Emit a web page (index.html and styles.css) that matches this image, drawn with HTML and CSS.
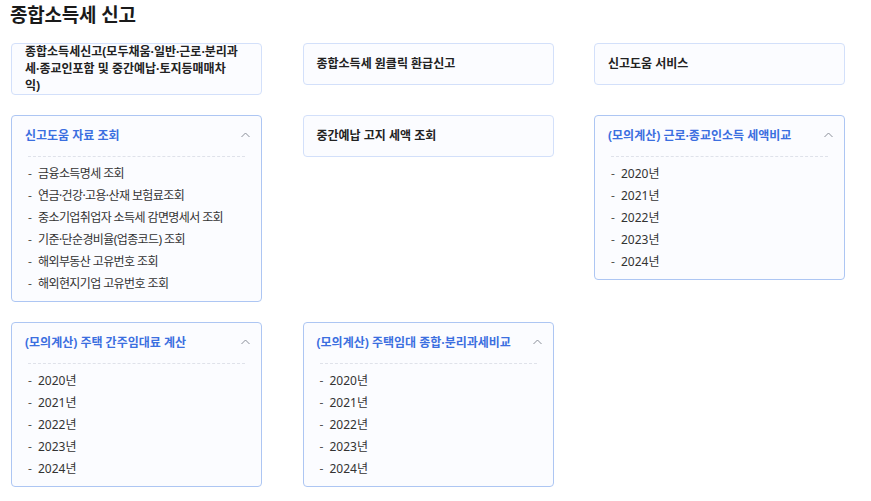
FILE: index.html
```html
<!DOCTYPE html>
<html lang="ko">
<head>
    <meta charset="UTF-8">
    <meta name="viewport" content="width=device-width, initial-scale=1.0">
    <title>종합소득세 신고</title>
    <link rel="stylesheet" href="styles.css">
</head>
<body>
    <h1>종합소득세 신고</h1>
    <div class="menu-grid">
        <a class="card card-link card-link--long" href="#">종합소득세신고(모두채움·일반·근로·분리과세·종교인포함 및 중간예납·토지등매매차익)</a>
        <a class="card card-link" href="#">종합소득세 원클릭 환급신고</a>
        <a class="card card-link" href="#">신고도움 서비스</a>

        <div class="card card-open">
            <div class="card-head">
                <span>신고도움 자료 조회</span>
                <svg class="caret" width="9" height="6" viewBox="0 0 9 6"><polyline points="0.5,5 4.5,1 8.5,5" fill="none" stroke="#8a8f99" stroke-width="1"/></svg>
            </div>
            <ul class="sub-list sub-list--docs">
                <li>금융소득명세 조회</li>
                <li>연금·건강·고용·산재 보험료조회</li>
                <li>중소기업취업자 소득세 감면명세서 조회</li>
                <li>기준·단순경비율(업종코드) 조회</li>
                <li>해외부동산 고유번호 조회</li>
                <li>해외현지기업 고유번호 조회</li>
            </ul>
        </div>
        <a class="card card-link" href="#">중간예납 고지 세액 조회</a>
        <div class="card card-open">
            <div class="card-head">
                <span>(모의계산) 근로·종교인소득 세액비교</span>
                <svg class="caret" width="9" height="6" viewBox="0 0 9 6"><polyline points="0.5,5 4.5,1 8.5,5" fill="none" stroke="#8a8f99" stroke-width="1"/></svg>
            </div>
            <ul class="sub-list">
                <li>2020년</li>
                <li>2021년</li>
                <li>2022년</li>
                <li>2023년</li>
                <li>2024년</li>
            </ul>
        </div>

        <div class="card card-open">
            <div class="card-head">
                <span>(모의계산) 주택 간주임대료 계산</span>
                <svg class="caret" width="9" height="6" viewBox="0 0 9 6"><polyline points="0.5,5 4.5,1 8.5,5" fill="none" stroke="#8a8f99" stroke-width="1"/></svg>
            </div>
            <ul class="sub-list">
                <li>2020년</li>
                <li>2021년</li>
                <li>2022년</li>
                <li>2023년</li>
                <li>2024년</li>
            </ul>
        </div>
        <div class="card card-open">
            <div class="card-head">
                <span>(모의계산) 주택임대 종합·분리과세비교</span>
                <svg class="caret" width="9" height="6" viewBox="0 0 9 6"><polyline points="0.5,5 4.5,1 8.5,5" fill="none" stroke="#8a8f99" stroke-width="1"/></svg>
            </div>
            <ul class="sub-list">
                <li>2020년</li>
                <li>2021년</li>
                <li>2022년</li>
                <li>2023년</li>
                <li>2024년</li>
            </ul>
        </div>
    </div>
</body>
</html>
```

FILE: styles.css
```css
body {
    font-family: "Noto Sans", "Noto Sans CJK KR", sans-serif;
    margin: 0;
    padding: 0 11px;
    color: #222;
    background: #fff;
}
h1 {
    font-size: 19px;
    font-weight: bold;
    line-height: 26px;
    letter-spacing: -0.2px;
    margin: 2px 0 15px -1px;
    color: #1a1a1a;
}
.menu-grid {
    display: grid;
    grid-template-columns: repeat(3, 251px);
    column-gap: 40.5px;
    row-gap: 20px;
    align-items: start;
}
.card {
    border: 1px solid #d3e0fa;
    border-radius: 4px;
    background: #fbfcff;
    box-sizing: border-box;
}
.card-link {
    display: flex;
    align-items: center;
    min-height: 42px;
    padding: 0 13px;
    font-size: 12px;
    font-weight: bold;
    line-height: 1.4;
    color: #222;
    text-decoration: none;
    word-break: break-all;
}
.card-link--long {
    padding-right: 21px;
}
.card-open {
    border-color: #adc6f3;
}
.card-head {
    display: flex;
    justify-content: space-between;
    align-items: center;
    padding: 10px 11px 10px 13px;
    line-height: 20px;
    font-size: 12px;
    font-weight: bold;
    color: #3b6fe0;
}
.caret {
    display: block;
    margin-top: -2px;
}
.sub-list {
    list-style: none;
    margin: 0 16px;
    padding: 6px 0 6px;
    border-top: 1px dashed #dfe2ea;
}
.sub-list li {
    font-size: 12px;
    line-height: 22px;
    color: #333;
}
.sub-list--docs li {
    letter-spacing: -0.6px;
}
.sub-list li::before {
    content: "-";
    display: inline-block;
    width: 10px;
    letter-spacing: 0;
    color: #555;
}
```
